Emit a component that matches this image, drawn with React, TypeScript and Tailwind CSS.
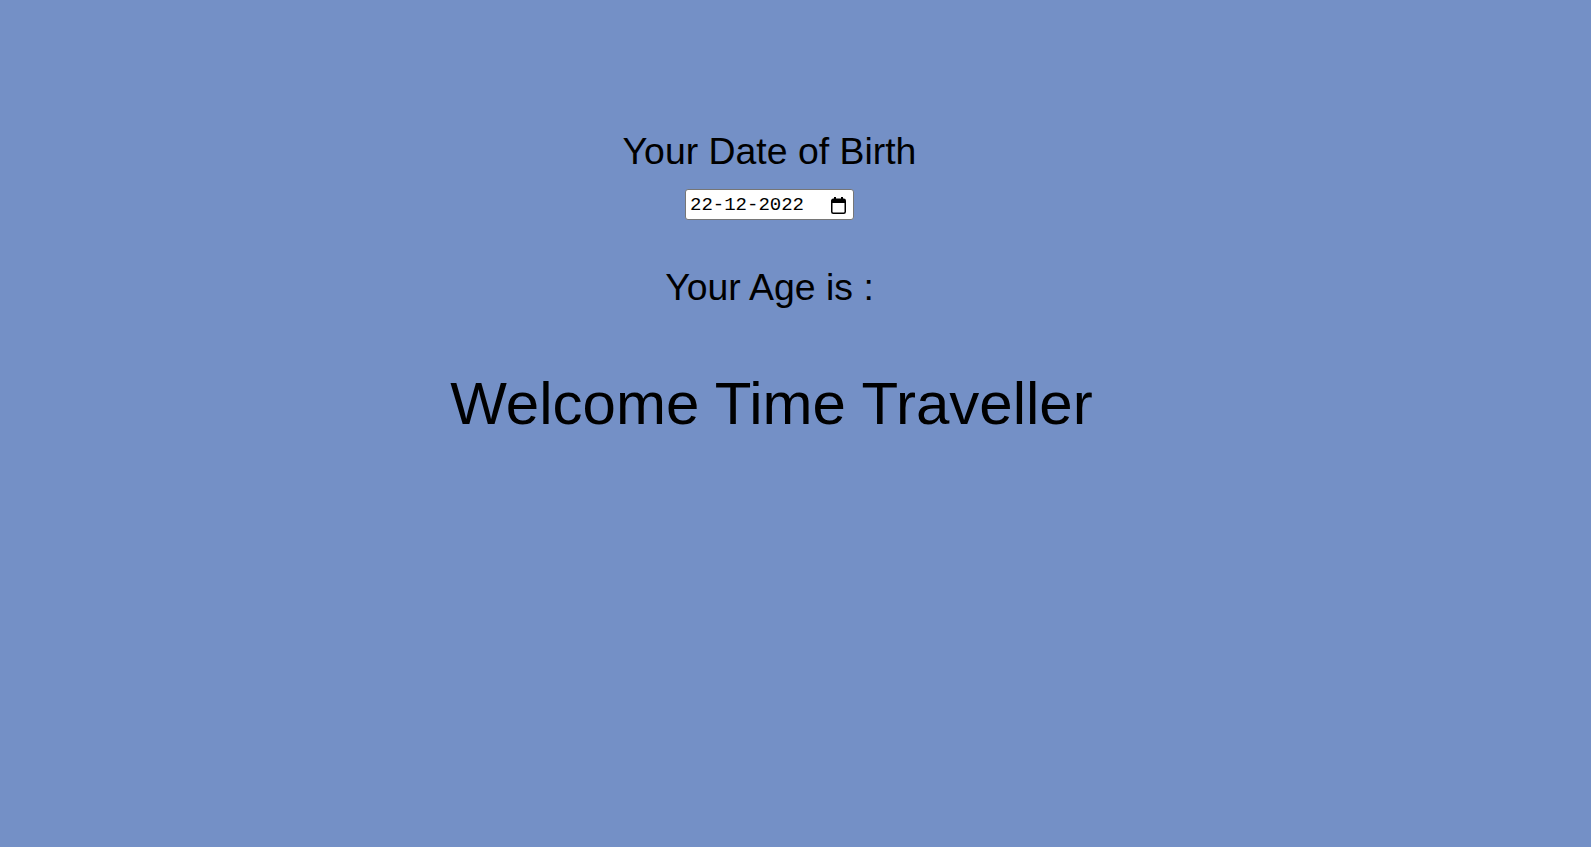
import React from "react";

function CalendarIcon() {
  return (
    <svg width="15" height="17" viewBox="0 0 15 17" className="block">
      <rect x="3" y="0" width="2" height="3" fill="#000" />
      <rect x="10" y="0" width="2" height="3" fill="#000" />
      <rect x="0.75" y="2.25" width="13.5" height="14" rx="1.5" fill="none" stroke="#000" strokeWidth="1.5" />
      <rect x="1" y="2.5" width="13" height="3.5" fill="#000" />
    </svg>
  );
}

export default function App() {
  return (
    <div
      className="min-h-[847px] w-full bg-[#7490c6] flex flex-col items-center pr-[52px] text-black"
      style={{ fontFamily: '"Liberation Sans", Arial, sans-serif' }}
    >
      <h1 className="mt-[130px] text-[37.4px] leading-[42px]">Your Date of Birth</h1>
      <div className="mt-[17px] h-[31px] w-[169px] bg-white border border-[#767676] rounded-[3px] flex items-center pl-[4px] pr-[7px] pt-[2px]">
        <span
          className="text-[19px] leading-none text-black"
          style={{ fontFamily: '"Liberation Mono", "DejaVu Sans Mono", monospace' }}
        >
          22-12-2022
        </span>
        <span className="ml-auto">
          <CalendarIcon />
        </span>
      </div>
      <h2 className="mt-[46px] text-[37.4px] leading-[42px]">Your Age is :</h2>
      <h1 className="mt-[61px] ml-[4px] text-[60px] leading-[69px]">Welcome Time Traveller</h1>
    </div>
  );
}
